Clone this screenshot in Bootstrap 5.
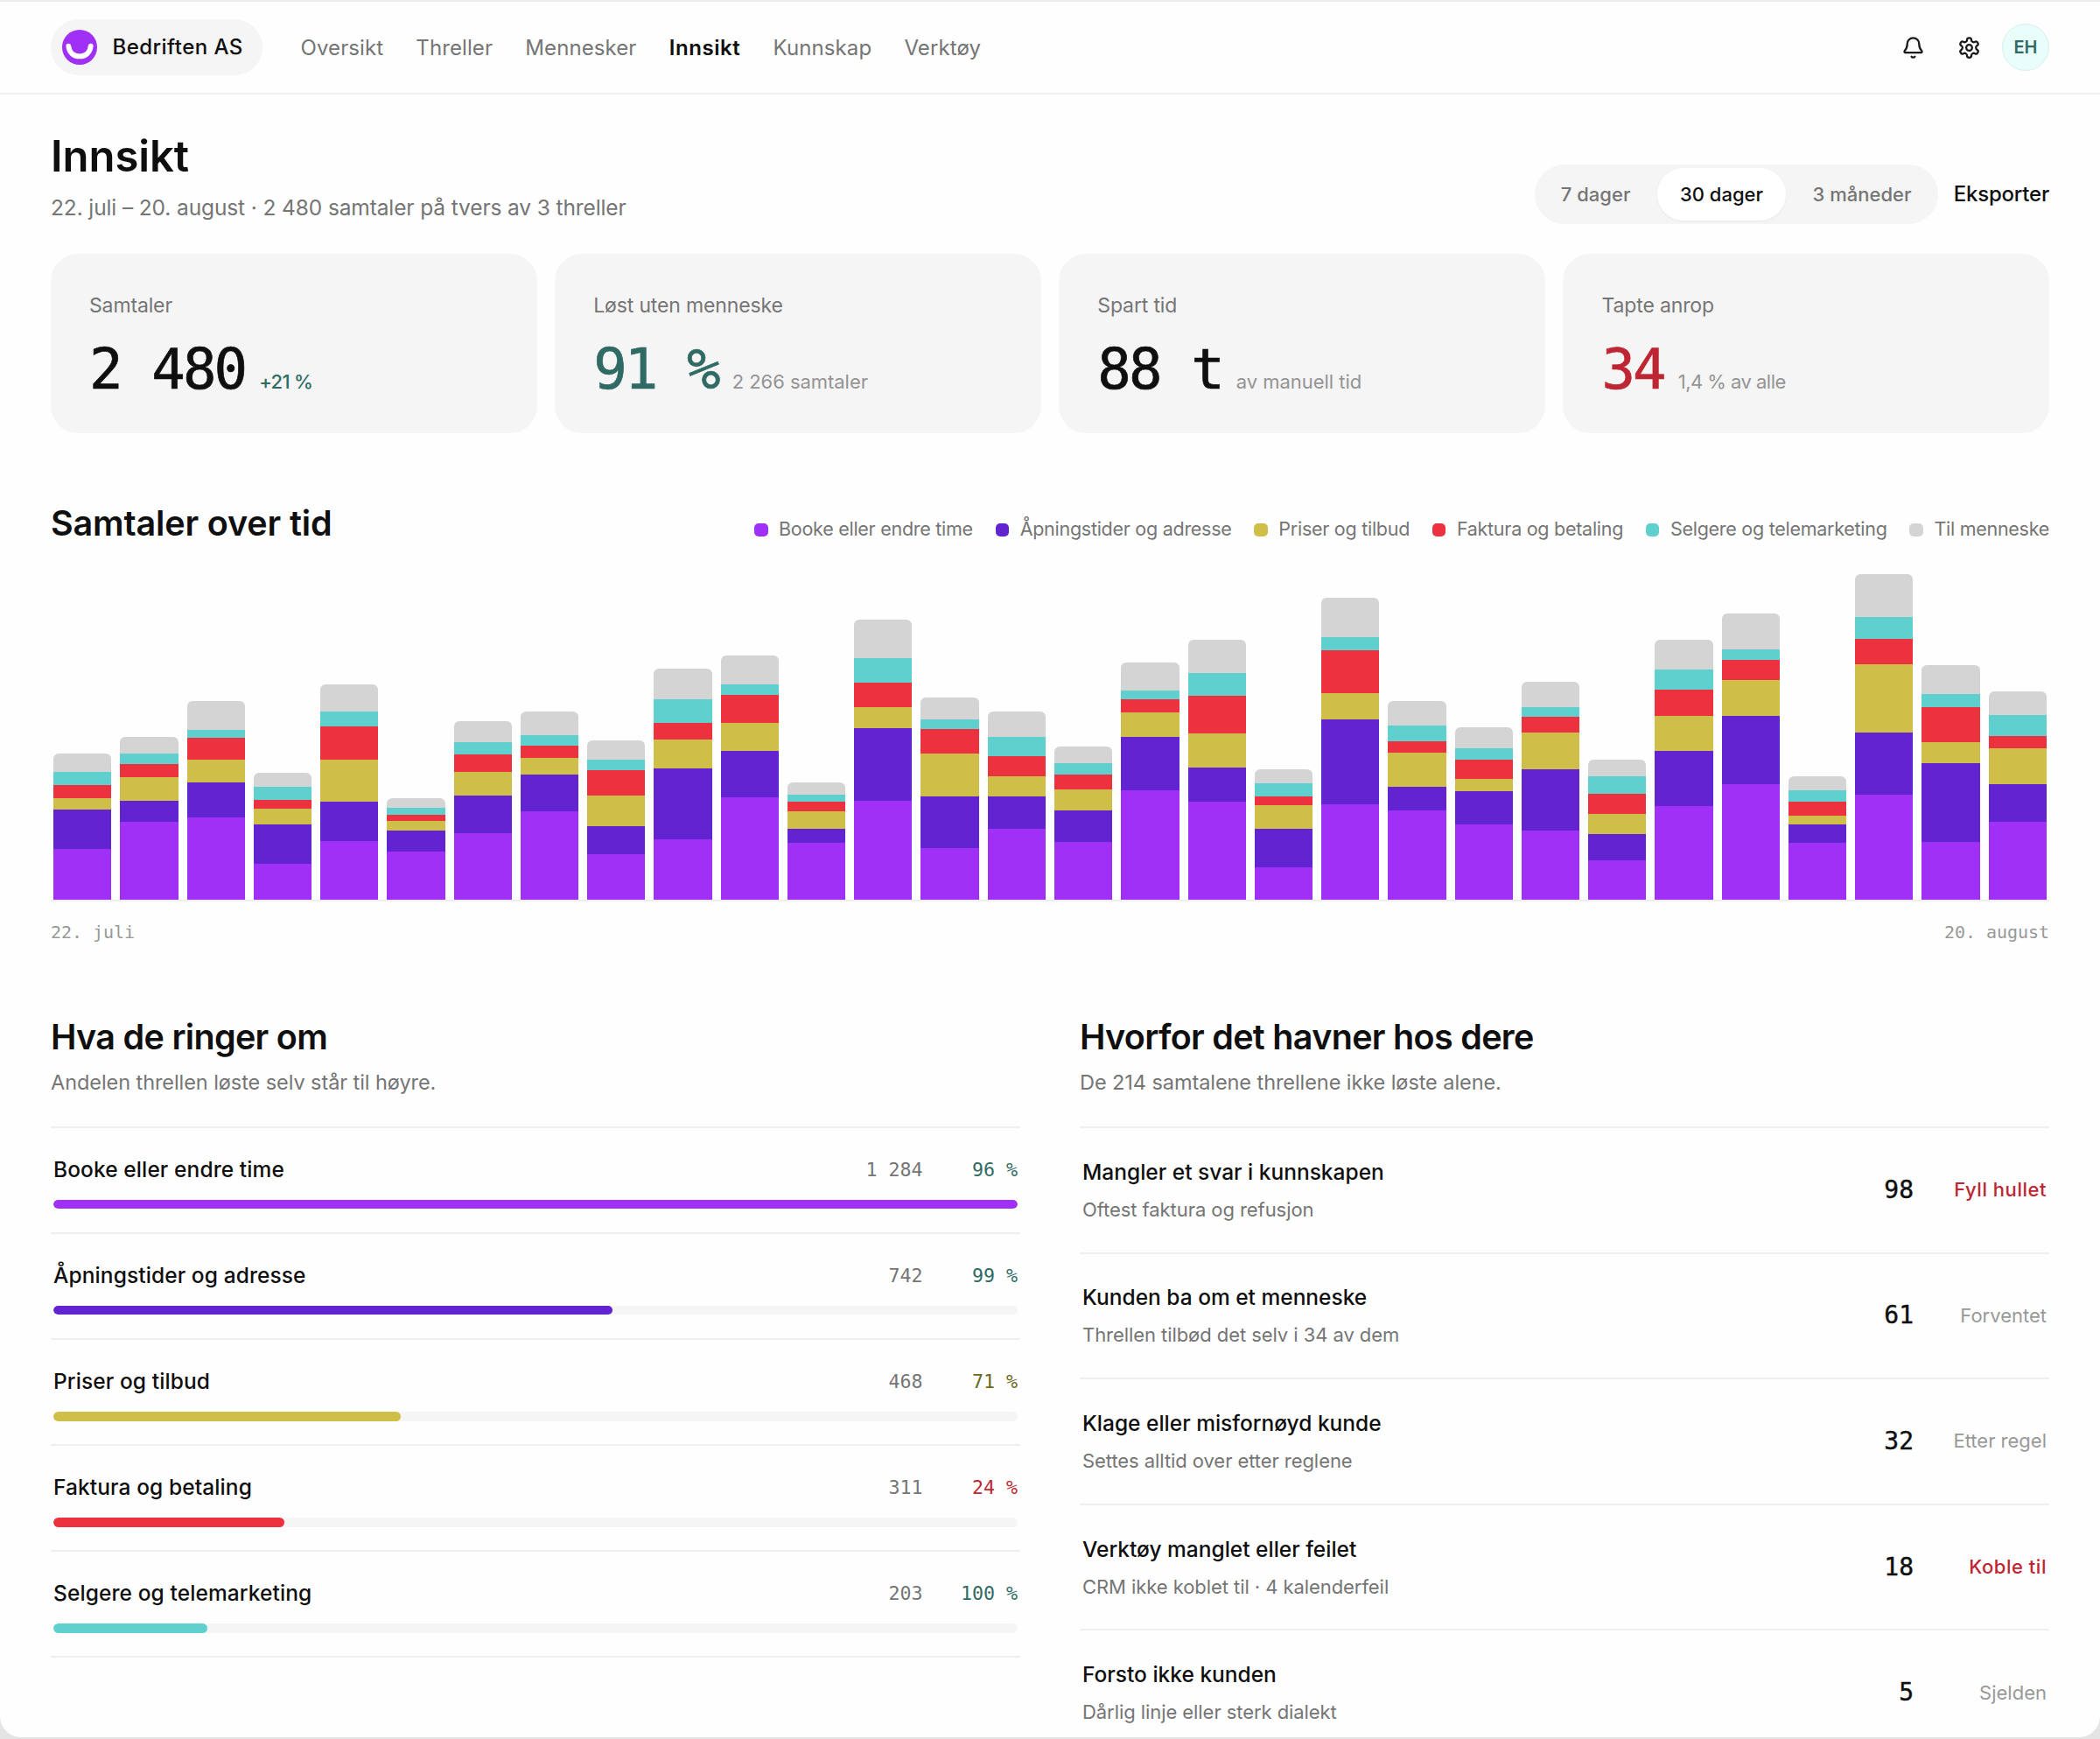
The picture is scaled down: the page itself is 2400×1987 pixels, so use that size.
<!DOCTYPE html>
<html lang="nb">
<head>
<meta charset="utf-8">
<meta name="viewport" content="width=device-width, initial-scale=1">
<title>Innsikt – Bedriften AS</title>
<link href="https://cdn.jsdelivr.net/npm/bootstrap@5.3.0/dist/css/bootstrap.min.css" rel="stylesheet">
<style>
  :root {
    --ink: #0f0f0f; --muted: #757575; --faint: #999; --line: #efefef; --soft: #f5f5f5;
    --violet: #a030f5; --indigo: #6224d0; --ochre: #cfbf48; --red: #eb323e; --aqua: #5fd0cd; --grey: #d4d4d4;
    --good: #2f6b64; --warn: #6b6a1c; --bad: #be2633;
    --mono: "DejaVu Sans Mono", "Liberation Mono", monospace;
  }
  body { background: #e4e4e4; font-family: Inter, "Liberation Sans", sans-serif; color: var(--ink); overflow: hidden; height: 1987px; }
  .window { height: 1985px; background: #fefefe; border-top: 2px solid #ececec; border-radius: 0 0 24px 24px; overflow: hidden; }
  .topbar { height: 106px; border-bottom: 2px solid #f1f1f1; padding: 0 58px; background: #fefefe; }
  .org { height: 64px; width: 242px; padding: 0 12px 0 13px; background: var(--soft); font-size: 24px; font-weight: 500; letter-spacing: .019em; gap: 17.5px; white-space: nowrap; }
  .mainnav { margin-left: 43.5px; gap: 37.2px; }
  .mainnav .nav-link { padding: 0; font-size: 24px; line-height: 33px; color: var(--muted); letter-spacing: .004em; }
  .mainnav .nav-link.active { color: var(--ink); font-weight: 600; letter-spacing: .024em; }
  .tools { gap: 37px; }
  .tools svg { width: 27px; height: 27px; fill: none; stroke: #1a1a1a; stroke-width: 2; stroke-linecap: round; stroke-linejoin: round; display: block; }
  .avatar { width: 54px; height: 54px; margin-left: -13px; background: #e9fdfa; border: 1.5px solid #d9efec; color: var(--good); font-size: 20px; font-weight: 600; }
  .page { padding: 42px 58px 0; }
  h1 { font-size: 49px; line-height: 57px; font-weight: 600; letter-spacing: -.001em; margin: 0 0 12px; }
  h2 { font-size: 39.5px; line-height: 48px; font-weight: 600; letter-spacing: -.0175em; margin: 0; white-space: nowrap; }
  .range-text { font-size: 24.5px; line-height: 37px; color: var(--muted); letter-spacing: -.005em; margin: 0; }
  .period { gap: 18px; }
  .segmented { height: 68px; padding: 4px; background: var(--soft); gap: 4px; }
  .segmented .btn { border: 0; padding: 0 26.3px; height: 60px; font-size: 22px; font-weight: 500; color: var(--muted); letter-spacing: 0; }
  .segmented .btn.active { background: #fff; color: var(--ink); box-shadow: 0 1px 3px rgba(0,0,0,.05); }
  .export { font-size: 24px; font-weight: 500; letter-spacing: -.009em; color: var(--ink); line-height: 68px; }
  .stats { gap: 20.6px; margin-top: 34px; }
  .stat { flex: 1 1 0; height: 205px; padding: 44px 44px 0; background: var(--soft); border-radius: 31px; }
  .stat-label { font-size: 23px; line-height: 30px; color: var(--muted); letter-spacing: -.006em; margin-bottom: 25.5px; }
  .stat-value { font: 64px/64px var(--mono); letter-spacing: -2.9px; white-space: pre; -webkit-text-stroke: .7px currentColor; }
  .stat-note { font-size: 22px; color: #949494; letter-spacing: -.002em; margin-left: 16px; }
  .stat-note.up { color: var(--good); font-weight: 500; letter-spacing: -.03em; }
  .stat-note.tight { letter-spacing: -.024em; }
  .series { margin-top: 79px; }
  .series h2 { letter-spacing: -.0035em; }
  .legend { gap: 25.8px; font-size: 21.5px; color: var(--muted); letter-spacing: -.0125em; white-space: nowrap; }
  .legend i { width: 15.5px; height: 15.5px; border-radius: 5px; display: inline-block; margin-right: 12.5px; vertical-align: -1px; }
  .chart { height: 407.5px; padding: 0 3px; gap: 10px; border-bottom: 2px solid #efedf1; }
  .bar { flex: 1 1 0; border-radius: 6px 6px 0 0; overflow: hidden; }
  .c0 { background: var(--violet); } .c1 { background: var(--indigo); } .c2 { background: var(--ochre); }
  .c3 { background: var(--red); } .c4 { background: var(--aqua); } .c5 { background: var(--grey); }
  .axis { font: 20px/30px var(--mono); color: var(--faint); margin-top: 20px; letter-spacing: -.05px; }
  .lower { margin-top: 81.5px; gap: 68px; }
  .lower > section { flex: 1 1 0; min-width: 0; }
  .sub { font-size: 23.5px; line-height: 32px; color: var(--muted); letter-spacing: -.003em; margin: 12px 0 34px; }
  .rows { border-top: 2px solid var(--line); }
  .topic { height: 121.1px; padding: 31px 3px 0; border-bottom: 2px solid var(--line); }
  .topic-name { font-size: 24.5px; line-height: 32px; font-weight: 500; letter-spacing: .004em; }
  .topic-num { font: 21.6px/33px var(--mono); color: var(--muted); }
  .topic-pct { font: 21.6px/33px var(--mono); width: 108.5px; text-align: right; }
  .meter { height: 10.4px; margin-top: 18px; background: #f5f5f5; border-radius: 6px; }
  .meter .progress-bar { border-radius: 6px; }
  .good { color: var(--good); } .warn { color: var(--warn); } .bad { color: var(--bad); }
  .reason { height: 143.6px; padding: 0 3px; border-bottom: 2px solid var(--line); }
  .reason-title { font-size: 24.5px; line-height: 32px; font-weight: 500; letter-spacing: 0; }
  .reason-sub { font-size: 22px; line-height: 30px; color: var(--muted); letter-spacing: -.003em; margin-top: 12px; }
  .reason-n { font: 28px/34px var(--mono); -webkit-text-stroke: .4px currentColor; }
  .reason-act { width: 152px; text-align: right; font-size: 22px; color: var(--faint); }
  .reason-act.bad { color: var(--bad); font-weight: 500; letter-spacing: .024em; }
</style>
</head>
<body>
<div class="window">
  <header class="topbar d-flex align-items-center">
    <div class="org d-flex align-items-center rounded-pill">
      <svg width="40" height="40" viewBox="0 0 40 40" aria-hidden="true"><circle cx="20" cy="20" r="20" fill="#a030f5"/><path d="M7.3 18.6C8 26 13 30.4 20 30.4S32 26 32.7 18.6" fill="none" stroke="#fff" stroke-width="5.8" stroke-linecap="round"/></svg>
      <span>Bedriften AS</span>
    </div>
    <nav class="mainnav nav flex-nowrap">
      <a class="nav-link" href="#">Oversikt</a>
      <a class="nav-link" href="#">Threller</a>
      <a class="nav-link" href="#">Mennesker</a>
      <a class="nav-link active" href="#">Innsikt</a>
      <a class="nav-link" href="#">Kunnskap</a>
      <a class="nav-link" href="#">Verktøy</a>
    </nav>
    <div class="tools d-flex align-items-center ms-auto">
      <svg viewBox="0 0 24 24"><path d="M10.268 21a2 2 0 0 0 3.464 0"/><path d="M3.262 15.326A1 1 0 0 0 4 17h16a1 1 0 0 0 .74-1.673C19.41 13.956 18 12.499 18 8A6 6 0 0 0 6 8c0 4.499-1.411 5.956-2.738 7.326"/></svg>
      <svg viewBox="0 0 24 24"><path d="M12.22 2h-.44a2 2 0 0 0-2 2v.18a2 2 0 0 1-1 1.73l-.43.25a2 2 0 0 1-2 0l-.15-.08a2 2 0 0 0-2.73.73l-.22.38a2 2 0 0 0 .73 2.73l.15.1a2 2 0 0 1 1 1.72v.51a2 2 0 0 1-1 1.74l-.15.09a2 2 0 0 0-.73 2.73l.22.38a2 2 0 0 0 2.73.73l.15-.08a2 2 0 0 1 2 0l.43.25a2 2 0 0 1 1 1.73V20a2 2 0 0 0 2 2h.44a2 2 0 0 0 2-2v-.18a2 2 0 0 1 1-1.73l.43-.25a2 2 0 0 1 2 0l.15.08a2 2 0 0 0 2.73-.73l.22-.39a2 2 0 0 0-.73-2.73l-.15-.08a2 2 0 0 1-1-1.74v-.5a2 2 0 0 1 1-1.74l.15-.09a2 2 0 0 0 .73-2.73l-.22-.38a2 2 0 0 0-2.73-.73l-.15.08a2 2 0 0 1-2 0l-.43-.25a2 2 0 0 1-1-1.73V4a2 2 0 0 0-2-2z"/><circle cx="12" cy="12" r="3"/></svg>
      <div class="avatar rounded-circle d-flex align-items-center justify-content-center">EH</div>
    </div>
  </header>

  <main class="page">
    <div class="d-flex justify-content-between align-items-end">
      <div>
        <h1>Innsikt</h1>
        <p class="range-text">22. juli – 20. august · 2 480 samtaler på tvers av 3 threller</p>
      </div>
      <div class="period d-flex align-items-center">
        <div class="segmented d-flex rounded-pill">
          <button class="btn rounded-pill" type="button">7 dager</button>
          <button class="btn rounded-pill active" type="button">30 dager</button>
          <button class="btn rounded-pill" type="button">3 måneder</button>
        </div>
        <span class="export">Eksporter</span>
      </div>
    </div>

    <div class="stats d-flex">
      <div class="stat"><div class="stat-label">Samtaler</div><div class="d-flex align-items-baseline"><span class="stat-value">2 480</span><span class="stat-note up">+21 %</span></div></div>
      <div class="stat"><div class="stat-label">Løst uten menneske</div><div class="d-flex align-items-baseline"><span class="stat-value good">91 %</span><span class="stat-note">2 266 samtaler</span></div></div>
      <div class="stat"><div class="stat-label">Spart tid</div><div class="d-flex align-items-baseline"><span class="stat-value">88 t</span><span class="stat-note">av manuell tid</span></div></div>
      <div class="stat"><div class="stat-label">Tapte anrop</div><div class="d-flex align-items-baseline"><span class="stat-value bad">34</span><span class="stat-note tight">1,4 % av alle</span></div></div>
    </div>

    <section class="series">
      <div class="d-flex justify-content-between align-items-baseline">
        <h2>Samtaler over tid</h2>
        <div class="legend d-flex">
          <span><i class="c0"></i>Booke eller endre time</span>
          <span><i class="c1"></i>Åpningstider og adresse</span>
          <span><i class="c2"></i>Priser og tilbud</span>
          <span><i class="c3"></i>Faktura og betaling</span>
          <span><i class="c4"></i>Selgere og telemarketing</span>
          <span><i class="c5"></i>Til menneske</span>
        </div>
      </div>
      <div class="chart d-flex align-items-end" id="chart"></div>
      <div class="axis d-flex justify-content-between"><span>22. juli</span><span>20. august</span></div>
    </section>

    <div class="lower d-flex">
      <section>
        <h2>Hva de ringer om</h2>
        <p class="sub">Andelen threllen løste selv står til høyre.</p>
        <div class="rows">
          <div class="topic"><div class="d-flex"><span class="topic-name me-auto">Booke eller endre time</span><span class="topic-num">1 284</span><span class="topic-pct good">96 %</span></div><div class="meter progress"><div class="progress-bar c0" style="width:100%"></div></div></div>
          <div class="topic"><div class="d-flex"><span class="topic-name me-auto">Åpningstider og adresse</span><span class="topic-num">742</span><span class="topic-pct good">99 %</span></div><div class="meter progress"><div class="progress-bar c1" style="width:58%"></div></div></div>
          <div class="topic"><div class="d-flex"><span class="topic-name me-auto">Priser og tilbud</span><span class="topic-num">468</span><span class="topic-pct warn">71 %</span></div><div class="meter progress"><div class="progress-bar c2" style="width:36%"></div></div></div>
          <div class="topic"><div class="d-flex"><span class="topic-name me-auto">Faktura og betaling</span><span class="topic-num">311</span><span class="topic-pct bad">24 %</span></div><div class="meter progress"><div class="progress-bar c3" style="width:24%"></div></div></div>
          <div class="topic"><div class="d-flex"><span class="topic-name me-auto">Selgere og telemarketing</span><span class="topic-num">203</span><span class="topic-pct good">100 %</span></div><div class="meter progress"><div class="progress-bar c4" style="width:16%"></div></div></div>
        </div>
      </section>
      <section>
        <h2>Hvorfor det havner hos dere</h2>
        <p class="sub">De 214 samtalene threllene ikke løste alene.</p>
        <div class="rows">
          <div class="reason d-flex align-items-center"><div class="me-auto"><div class="reason-title">Mangler et svar i kunnskapen</div><div class="reason-sub">Oftest faktura og refusjon</div></div><span class="reason-n">98</span><span class="reason-act bad">Fyll hullet</span></div>
          <div class="reason d-flex align-items-center"><div class="me-auto"><div class="reason-title">Kunden ba om et menneske</div><div class="reason-sub">Threllen tilbød det selv i 34 av dem</div></div><span class="reason-n">61</span><span class="reason-act">Forventet</span></div>
          <div class="reason d-flex align-items-center"><div class="me-auto"><div class="reason-title">Klage eller misfornøyd kunde</div><div class="reason-sub">Settes alltid over etter reglene</div></div><span class="reason-n">32</span><span class="reason-act">Etter regel</span></div>
          <div class="reason d-flex align-items-center"><div class="me-auto"><div class="reason-title">Verktøy manglet eller feilet</div><div class="reason-sub">CRM ikke koblet til · 4 kalenderfeil</div></div><span class="reason-n">18</span><span class="reason-act bad">Koble til</span></div>
          <div class="reason d-flex align-items-center"><div class="me-auto"><div class="reason-title">Forsto ikke kunden</div><div class="reason-sub">Dårlig linje eller sterk dialekt</div></div><span class="reason-n">5</span><span class="reason-act">Sjelden</span></div>
        </div>
      </section>
    </div>
  </main>
</div>
<script src="https://cdn.jsdelivr.net/npm/bootstrap@5.3.0/dist/js/bootstrap.bundle.min.js"></script>
<script>
  // One entry per day: volume by topic, bottom segment first. Three units to a pixel.
  const days = [
    [172,137,38,46,45,63],[266,71,83,45,36,57],[281,121,78,74,28,99],[121,135,56,29,46,48],[200,135,145,114,51,91],
    [165,70,33,23,23,33],[228,129,81,58,43,73],[302,125,59,40,38,81],[154,97,106,86,37,66],[207,243,99,56,81,106],
    [349,160,96,96,37,98],[193,50,60,33,24,42],[339,248,71,86,84,132],[177,177,147,84,33,73],[241,111,71,68,66,88],
    [196,110,71,50,39,58],[375,182,84,44,32,96],[336,117,116,129,79,114],[111,130,83,30,43,49],[327,290,89,147,46,136],
    [306,81,117,38,55,84],[258,114,41,65,41,72],[236,210,127,52,33,89],[135,88,71,68,61,56],[321,188,121,88,69,104],
    [395,234,123,70,36,123],[193,63,32,46,41,48],[360,212,233,87,75,148],[198,270,71,119,46,99],[266,129,124,41,73,81]
  ];
  document.getElementById('chart').innerHTML = days.map(d =>
    '<div class="bar d-flex flex-column-reverse">' +
    d.map((v, i) => `<div class="c${i}" style="height:${(v / 3).toFixed(2)}px"></div>`).join('') + '</div>').join('');
</script>
</body>
</html>
